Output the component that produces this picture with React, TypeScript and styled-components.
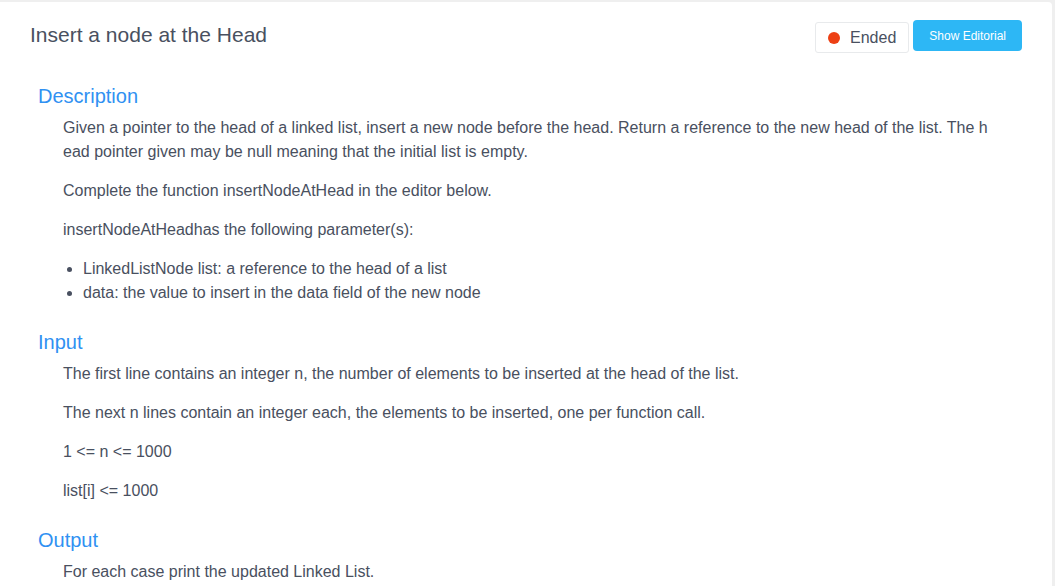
import React from "react";
import styled, { createGlobalStyle } from "styled-components";

const GlobalStyle = createGlobalStyle`
  html, body {
    margin: 0;
    padding: 0;
    background: #efefef;
  }
  body {
    font-family: "Liberation Sans", Arial, sans-serif;
    color: #495060;
  }
`;

const Page = styled.div`
  padding-top: 2px;
  width: 1052px;
`;

const Card = styled.div`
  background: #fff;
  border-radius: 0 4px 0 0;
  min-height: 600px;
`;

const Header = styled.div`
  display: flex;
  justify-content: space-between;
  align-items: flex-start;
  padding: 18px 30px 0 30px;
`;

const Title = styled.h1`
  margin: 0;
  font-size: 21px;
  line-height: 30px;
  font-weight: 400;
  color: #495060;
`;

const Actions = styled.div`
  display: flex;
  align-items: flex-start;
  gap: 4px;
`;

const StatusTag = styled.div`
  margin-top: 2px;
  height: 31px;
  box-sizing: border-box;
  display: flex;
  align-items: center;
  padding: 0 12px;
  border: 1px solid #e8eaec;
  border-radius: 3px;
  background: #fff;
  font-size: 16px;
  color: #495060;
`;

const Dot = styled.span<{ $color: string }>`
  width: 12px;
  height: 12px;
  border-radius: 50%;
  background: ${(p) => p.$color};
  margin-right: 10px;
`;

const EditorialButton = styled.button`
  height: 31px;
  padding: 0 16px;
  border: none;
  border-radius: 4px;
  background: #2db7f5;
  color: #fff;
  font-family: "Liberation Sans", Arial, sans-serif;
  font-size: 12px;
  cursor: pointer;
`;

const Body = styled.div`
  padding: 20.5px 38px 0 38px;
`;

const Section = styled.section``;

const SectionTitle = styled.h2`
  margin: 8.5px 0 5.5px 0;
  font-size: 20px;
  line-height: 28px;
  font-weight: 400;
  color: #3091f2;
`;

const Content = styled.div`
  display: flow-root;
  margin: 0 21px 0 25px;
  font-size: 16px;
  line-height: 24px;
  word-break: break-all;
`;

const Para = styled.p`
  margin: 0 0 15px 0;
`;

const List = styled.ul`
  margin: 0 0 15px 0;
  padding-left: 20px;
`;

export default function App() {
  return (
    <>
      <GlobalStyle />
      <Page>
        <Card>
          <Header>
            <Title>Insert a node at the Head</Title>
            <Actions>
              <StatusTag>
                <Dot $color="#ed4014" />
                Ended
              </StatusTag>
              <EditorialButton>Show Editorial</EditorialButton>
            </Actions>
          </Header>
          <Body>
            <Section>
              <SectionTitle>Description</SectionTitle>
              <Content>
                <Para>
                  Given a pointer to the head of a linked list, insert a new node before the head. Return a reference to the new head of the list. The head pointer given may be null meaning that the initial list is empty.
                </Para>
                <Para>Complete the function insertNodeAtHead in the editor below.</Para>
                <Para>insertNodeAtHeadhas the following parameter(s):</Para>
                <List>
                  <li>LinkedListNode list: a reference to the head of a list</li>
                  <li>data: the value to insert in the data field of the new node</li>
                </List>
              </Content>
            </Section>
            <Section>
              <SectionTitle>Input</SectionTitle>
              <Content>
                <Para>The first line contains an integer n, the number of elements to be inserted at the head of the list.</Para>
                <Para>The next n lines contain an integer each, the elements to be inserted, one per function call.</Para>
                <Para>1 &lt;= n &lt;= 1000</Para>
                <Para>list[i] &lt;= 1000</Para>
              </Content>
            </Section>
            <Section>
              <SectionTitle>Output</SectionTitle>
              <Content>
                <Para>For each case print the updated Linked List.</Para>
              </Content>
            </Section>
          </Body>
        </Card>
      </Page>
    </>
  );
}
